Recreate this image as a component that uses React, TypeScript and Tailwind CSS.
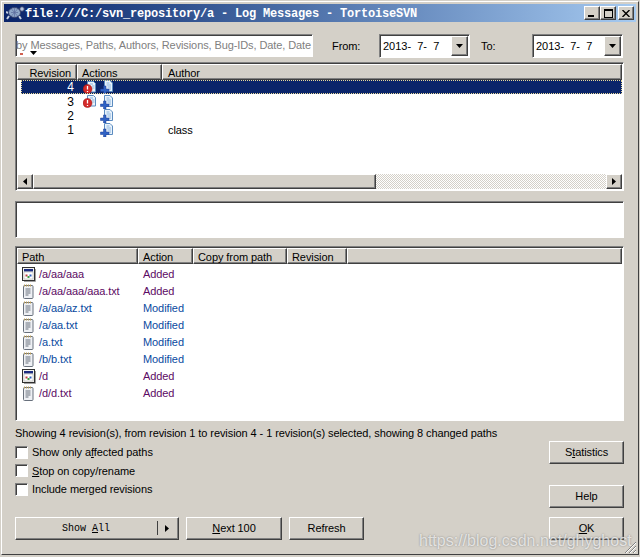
const ui = "font-['Liberation_Sans',Arial,sans-serif] text-[11px] tracking-[-0.08px] text-black";
const raised = 'border border-t-white border-l-white border-r-[#404040] border-b-[#404040] shadow-[inset_-1px_-1px_0_#808080] bg-[#d4d0c8]';
const sunken = 'border border-t-[#808080] border-l-[#808080] border-r-white border-b-white shadow-[inset_1px_1px_0_#404040]';

function Turtle() {
  return (
    <svg width="19" height="16" viewBox="0 0 19 16" className="shrink-0">
      <path d="M3 11l-2 3M13 11l2 3M2 8L0 7" stroke="#c8d2e2" strokeWidth="2" />
      <ellipse cx="8.500" cy="7.500" rx="6" ry="5" fill="#8fa6c8" stroke="#34406c" />
      <path d="M5 7.500h7M8.500 3v9M5.500 4l6 7M11.500 4l-6 7" stroke="#5c6c9c" strokeWidth="0.700" />
      <circle cx="16" cy="4" r="2.300" fill="#b8c6de" stroke="#34406c" />
    </svg>
  );
}

function WinButton({ children, last }: { children: React.ReactNode; last?: boolean }) {
  return (
    <div className={`w-[16px] h-[14px] ${raised} flex items-center justify-center ${last ? 'ml-[2px]' : ''}`}>
      {children}
    </div>
  );
}

function AddIcon() {
  return (
    <svg width="13" height="14" viewBox="0 0 13 14" className="shrink-0">
      <path d="M4.500 0.500h5.500l2.500 2.500v8.500h-8z" fill="#e8f2fc" stroke="#5c8cc0" />
      <path d="M6.500 3h3M6.500 5h4.500M7.500 7h3.500M9 9h2" stroke="#8cb4dc" />
      <path d="M3.500 6h2.500v3h3v2.500H6v2.500H3.500v-2.500H0.500V9h3z" fill="#2f62c4" stroke="#1c3f94" strokeWidth="0.500" />
    </svg>
  );
}

function ErrorIcon() {
  return (
    <svg width="13" height="13" viewBox="0 0 13 13" className="shrink-0">
      <path d="M4.500 0.500h6l2 2v8.500h-8z" fill="#e8f2fc" stroke="#5c8cc0" />
      <path d="M7 3h3M9 5h2.500M9.500 7h2" stroke="#8cb4dc" />
      <circle cx="4.500" cy="8" r="4.500" fill="#d42a2a" stroke="#8c1010" strokeWidth="0.500" />
      <path d="M4.500 5v3.500M4.500 10v1" stroke="#fff" strokeWidth="1.300" />
    </svg>
  );
}

function AppFileIcon() {
  return (
    <svg width="14" height="15" viewBox="0 0 14 15" className="shrink-0">
      <rect x="0.500" y="0.500" width="12" height="13" fill="#f4f4f0" stroke="#303030" />
      <path d="M13.500 2v12.500H2" stroke="#a0a0a0" fill="none" />
      <rect x="2" y="2" width="9" height="2.500" fill="#1c2c80" />
      <rect x="2" y="5" width="9" height="7" fill="#fff" stroke="#a0a0a0" strokeWidth="0.500" />
      <rect x="3.500" y="7.500" width="2" height="2" fill="#c04040" />
      <rect x="7.500" y="7.500" width="2" height="2" fill="#3060c0" />
      <rect x="5.500" y="9" width="2" height="2" fill="#40a040" />
    </svg>
  );
}

function TextFileIcon() {
  return (
    <svg width="12" height="15" viewBox="0 0 12 15" className="shrink-0">
      <rect x="1.500" y="1.500" width="9.500" height="13" rx="1" fill="#eef0f4" stroke="#68707c" />
      <path d="M2.500 0.500v2M4.500 0.500v2M6.500 0.500v2M8.500 0.500v2" stroke="#b89c58" />
      <path d="M3.500 5h5M3.500 7h5M3.500 9h5M3.500 11h3" stroke="#68707c" />
    </svg>
  );
}

function DateBox() {
  return (
    <div className={`w-[91px] h-[24px] ${sunken} bg-white flex items-center justify-between pl-[3px] pr-[1px]`}>
      <span className="text-[11px] tracking-normal whitespace-pre">2013-  7-  7</span>
      <div className={`w-[17px] h-[20px] ${raised} flex items-center justify-center`}>
        <svg width="7" height="4" viewBox="0 0 7 4"><path d="M0 0h7L3.500 4z" fill="#000" /></svg>
      </div>
    </div>
  );
}

function HeaderCell({ label, width, align }: { label: string; width: string; align?: string }) {
  return (
    <div className={`${width} h-[16px] shrink-0 ${raised} px-[4px] leading-[16px] whitespace-nowrap overflow-hidden ${align ?? ''}`}>
      {label}
    </div>
  );
}

const revisions = [
  { rev: 4, error: true, author: '', selected: true },
  { rev: 3, error: true, author: '' },
  { rev: 2, error: false, author: '' },
  { rev: 1, error: false, author: 'class' },
];

const paths = [
  { path: '/a/aa/aaa', action: 'Added', dir: true },
  { path: '/a/aa/aaa/aaa.txt', action: 'Added' },
  { path: '/a/aa/az.txt', action: 'Modified' },
  { path: '/a/aa.txt', action: 'Modified' },
  { path: '/a.txt', action: 'Modified' },
  { path: '/b/b.txt', action: 'Modified' },
  { path: '/d', action: 'Added', dir: true },
  { path: '/d/d.txt', action: 'Added' },
];

function Checkbox({ children }: { children: React.ReactNode }) {
  return (
    <div className="flex items-center h-[18.500px]">
      <div className={`w-[13px] h-[13px] ${sunken} bg-white mr-[4px]`} />
      <span>{children}</span>
    </div>
  );
}

function Button({ children, className }: { children: React.ReactNode; className?: string }) {
  return (
    <div className={`h-[23px] ${raised} flex items-center justify-center ${className ?? ''}`}>
      {children}
    </div>
  );
}

export default function App() {
  return (
    <div className={`w-[640px] h-[557px] bg-[#d4d0c8] relative overflow-hidden p-[1px] ${ui}`}>
      <div className="h-[554px] border border-t-white border-l-white border-r-[#404040] border-b-[#404040] p-[2px]">
        {/* title bar */}
        <div className="h-[18px] flex items-center pl-[2px] pr-[2px] bg-gradient-to-r from-[#0a246a] to-[#a6caf0]">
          <Turtle />
          <span className="pt-[2px] font-['Liberation_Mono',monospace] font-bold text-[12px] tracking-[-0.2px] text-white whitespace-pre flex-1">
            file:///C:/svn_repository/a - Log Messages - TortoiseSVN
          </span>
          <WinButton>
            <div className="w-[6px] h-[2px] bg-black mt-[6px] mr-[2px]" />
          </WinButton>
          <WinButton>
            <div className="w-[9px] h-[9px] border border-black border-t-2" />
          </WinButton>
          <WinButton last>
            <svg width="8" height="7" viewBox="0 0 8 7">
              <path d="M0.500 0L7.500 7M7.500 0L0.500 7" stroke="#000" strokeWidth="1.400" />
            </svg>
          </WinButton>
        </div>

        <div className="pl-[11px] pr-[12px]">
          {/* filter row */}
          <div className="flex mt-[12px] h-[24px]">
            <div className={`relative w-[298px] h-[23px] ${sunken} bg-white overflow-hidden flex items-center justify-end pr-[1px]`}>
              <span className="text-[#808080] text-[11px] tracking-[-0.1px] whitespace-nowrap">by Messages, Paths, Authors, Revisions, Bug-IDs, Date, Date</span>
              <div className="absolute left-[4px] bottom-[1px] w-[3px] h-[2px] bg-[#d06050]" />
              <svg width="7" height="4" viewBox="0 0 7 4" className="absolute left-[14px] bottom-[1px]">
                <path d="M0 0h7L3.500 4z" fill="#000" />
              </svg>
            </div>
            <span className="ml-[19px] w-[47px] leading-[24px]">From:</span>
            <DateBox />
            <span className="ml-[11px] w-[51px] leading-[24px]">To:</span>
            <DateBox />
          </div>

          {/* revision list */}
          <div className={`mt-[4px] w-[609px] h-[129px] ${sunken} bg-white flex flex-col p-[1px]`}>
            <div className="flex bg-[#d4d0c8] shrink-0">
              <HeaderCell label="Revision" width="w-[60px]" align="text-right pr-[5px]" />
              <HeaderCell label="Actions" width="w-[85px]" />
              <HeaderCell label="Author" width="flex-1 pl-[5px]" />
            </div>
            <div className="flex-1">
              {revisions.map((r) => (
                <div
                  key={r.rev}
                  className={`flex h-[14.400px] items-center ${r.selected ? 'ml-[4px] bg-[#0a246a] text-white outline-1 outline-dotted -outline-offset-1 outline-[#e8d898]' : ''}`}
                >
                  <div className={`${r.selected ? 'w-[53px]' : 'w-[57px]'} text-right text-[12px] tracking-normal`}>{r.rev}</div>
                  <div className="w-[26px] pl-[9px] flex">{r.error && <ErrorIcon />}</div>
                  <div className="w-[68px]"><AddIcon /></div>
                  <div>{r.author}</div>
                </div>
              ))}
            </div>
            <div className="h-[15px] shrink-0 flex bg-[#d4d0c8]">
              <div className={`w-[16px] h-[15px] ${raised} flex items-center justify-center`}>
                <svg width="4" height="7" viewBox="0 0 4 7"><path d="M4 0v7L0 3.500z" fill="#000" /></svg>
              </div>
              <div className={`w-[343px] h-[15px] ${raised}`} />
              <div className="flex-1 bg-[repeating-conic-gradient(#fff_0_25%,#d4d0c8_0_50%)] bg-[length:2px_2px]" />
              <div className={`w-[16px] h-[15px] ${raised} flex items-center justify-center`}>
                <svg width="4" height="7" viewBox="0 0 4 7"><path d="M0 0v7l4-3.500z" fill="#000" /></svg>
              </div>
            </div>
          </div>

          {/* message box */}
          <div className={`mt-[10px] w-[609px] h-[37px] ${sunken} bg-white`} />

          {/* changed paths */}
          <div className={`mt-[8px] w-[609px] h-[175px] ${sunken} bg-white p-[1px]`}>
            <div className="flex bg-[#d4d0c8]">
              <HeaderCell label="Path" width="w-[121px]" />
              <HeaderCell label="Action" width="w-[55px]" />
              <HeaderCell label="Copy from path" width="w-[94px]" />
              <HeaderCell label="Revision" width="w-[60px]" />
              <HeaderCell label="" width="flex-1" />
            </div>
            <div className="pt-[2px]">
              {paths.map((p) => (
                <div
                  key={p.path}
                  className={`flex h-[17px] items-center ${p.action === 'Added' ? 'text-[#5c0a64]' : 'text-[#0a4aa0]'}`}
                >
                  <div className="w-[22px] pl-[5px] flex">{p.dir ? <AppFileIcon /> : <TextFileIcon />}</div>
                  <div className="w-[104px] whitespace-nowrap">{p.path}</div>
                  <div>{p.action}</div>
                </div>
              ))}
            </div>
          </div>

          <div className="mt-[5px] h-[15px] leading-[15px] whitespace-nowrap">
            Showing 4 revision(s), from revision 1 to revision 4 - 1 revision(s) selected, showing 8 changed paths
          </div>

          {/* bottom */}
          <div className="flex justify-between h-[99px]">
            <div className="flex flex-col justify-between">
              <div className="pt-[2px]">
                <Checkbox>Show only a<u>f</u>fected paths</Checkbox>
                <Checkbox><u>S</u>top on copy/rename</Checkbox>
                <Checkbox>Include merged revisions</Checkbox>
              </div>
              <div className="flex gap-[7px]">
                <Button className="w-[164px] relative font-['Liberation_Mono',monospace] text-[10px] tracking-normal">
                  <span className="pr-[22px]">Show <u>A</u>ll</span>
                  <div className="absolute right-[20px] top-[3px] h-[14px] w-[1px] bg-[#404040]" />
                  <svg width="4" height="7" viewBox="0 0 4 7" className="absolute right-[9px] top-[7px]">
                    <path d="M0 0v7l4-3.500z" fill="#000" />
                  </svg>
                </Button>
                <Button className="w-[96px]"><span><u>N</u>ext 100</span></Button>
                <Button className="w-[75px]">Refresh</Button>
              </div>
            </div>
            <div className="w-[75px] flex flex-col">
              <Button>S<u>t</u>atistics</Button>
              <Button className="mt-[21px]">Help</Button>
              <Button className="mt-[9px]"><span><u>O</u>K</span></Button>
            </div>
          </div>
        </div>
      </div>

      {/* csdn watermark */}
      <div className="absolute left-[419px] top-[529px] text-[16px] tracking-normal text-white/70 [text-shadow:0_0_2px_#808080] whitespace-nowrap">
        https://blog.csdn.net/ghyghost
      </div>
      {/* resize grip */}
      <svg width="13" height="13" viewBox="0 0 13 13" className="absolute right-[3px] bottom-[3px]">
        <path d="M12 1L1 12M12 5L5 12M12 9L9 12" stroke="#808080" />
        <path d="M12 2L2 12M12 6L6 12M12 10L10 12" stroke="#fff" />
      </svg>
    </div>
  );
}
